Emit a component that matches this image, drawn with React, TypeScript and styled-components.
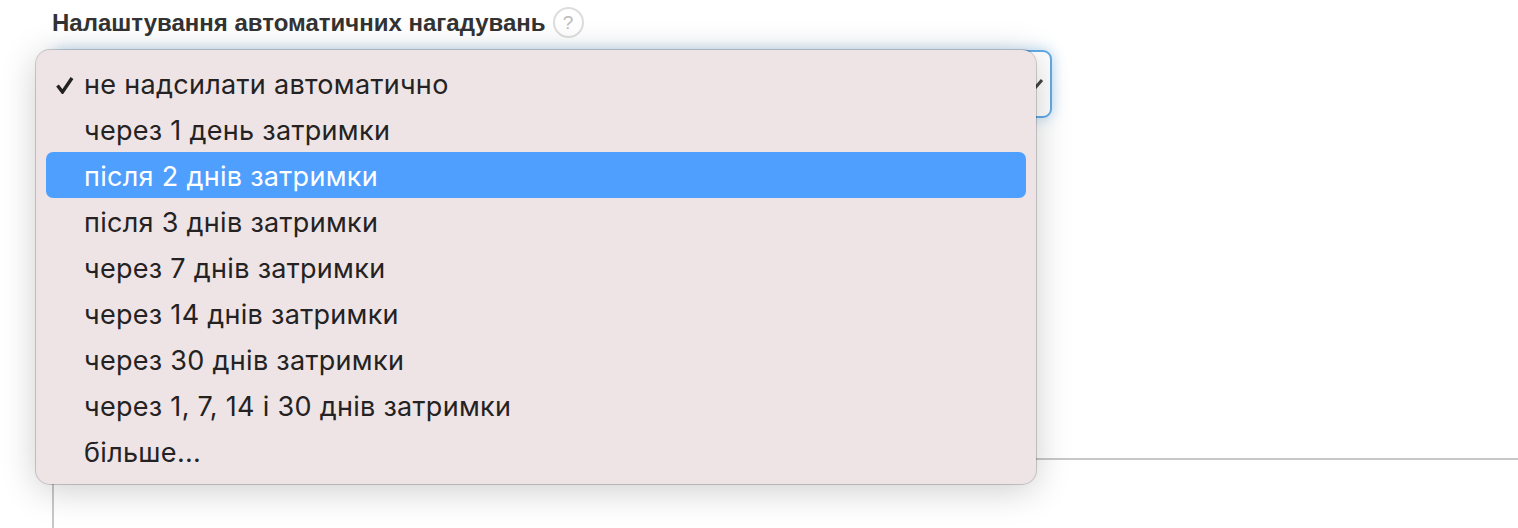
import React from 'react';
import styled, { createGlobalStyle } from 'styled-components';

const options = [
  'не надсилати автоматично',
  'через 1 день затримки',
  'після 2 днів затримки',
  'після 3 днів затримки',
  'через 7 днів затримки',
  'через 14 днів затримки',
  'через 30 днів затримки',
  'через 1, 7, 14 і 30 днів затримки',
  'більше...',
];

const GlobalStyle = createGlobalStyle`
  html, body {
    margin: 0;
    height: 528px;
    overflow: hidden;
    background: #fff;
    font-family: "Liberation Sans", Arial, sans-serif;
  }
`;

const Page = styled.div`
  position: relative;
  height: 528px;
  padding: 7px 0 0 52px;
  box-sizing: border-box;
  overflow: hidden;
`;

const LabelRow = styled.div`
  display: flex;
  align-items: center;
  gap: 7px;
  height: 31px;
  margin-bottom: 12px;
`;

const Label = styled.label`
  font-size: 24px;
  font-weight: 700;
  color: #333;
`;

const HelpBadge = styled.span`
  display: flex;
  align-items: center;
  justify-content: center;
  width: 31px;
  height: 31px;
  box-sizing: border-box;
  border: 2px solid #ddd;
  border-radius: 50%;
  color: #bbb;
  font-size: 19px;
`;

const SelectBox = styled.div`
  width: 1000px;
  height: 68px;
  box-sizing: border-box;
  border: 2px solid #62abe6;
  border-radius: 9px;
  background: #fff;
  box-shadow: 0 0 14px rgba(90, 169, 230, 0.45);
  display: flex;
  align-items: center;
  justify-content: flex-end;
  padding-right: 5px;
`;

const Arrow = styled.svg`
  width: 12px;
  height: 12px;
`;

const TextArea = styled.div`
  width: 1466px;
  height: 80px;
  margin-top: 340px;
  box-sizing: border-box;
  border-top: 2px solid #c8c8c8;
  border-left: 2px solid #c8c8c8;
`;

const Menu = styled.ul`
  position: absolute;
  left: 36px;
  top: 50px;
  width: 1000px;
  height: 434px;
  box-sizing: border-box;
  margin: 0;
  padding: 10px 10px;
  list-style: none;
  background: #eee4e5;
  border-radius: 14px;
  box-shadow: 0 0 0 1px rgba(0, 0, 0, 0.18), 0 6px 36px rgba(0, 0, 0, 0.2);
`;

const Item = styled.li<{ $active?: boolean }>`
  position: relative;
  height: 46px;
  line-height: 50px;
  padding-left: 38px;
  border-radius: 7px;
  font-family: Inter, "Noto Sans", sans-serif;
  font-size: 27px;
  letter-spacing: 0.3px;
  color: ${(p) => (p.$active ? '#fff' : '#242222')};
  background: ${(p) => (p.$active ? '#4f9fff' : 'transparent')};
`;

const Check = styled.svg`
  position: absolute;
  left: 9px;
  top: 16px;
  width: 20px;
  height: 18px;
`;

export default function App() {
  return (
    <>
      <GlobalStyle />
      <Page>
        <LabelRow>
          <Label>Налаштування автоматичних нагадувань</Label>
          <HelpBadge>?</HelpBadge>
        </LabelRow>
        <SelectBox>
          <Arrow viewBox="0 0 12 12">
            <path d="M2 10 L9 2" stroke="#444" strokeWidth="3" fill="none" />
          </Arrow>
        </SelectBox>
        <TextArea />
        <Menu>
          {options.map((o, i) => (
            <Item key={o} $active={i === 2}>
              {i === 0 && (
                <Check viewBox="0 0 20 18">
                  <path d="M2.5 9.5 L7.5 16 L17 2" stroke="#222" strokeWidth="3.4" fill="none" />
                </Check>
              )}
              {o}
            </Item>
          ))}
        </Menu>
      </Page>
    </>
  );
}
